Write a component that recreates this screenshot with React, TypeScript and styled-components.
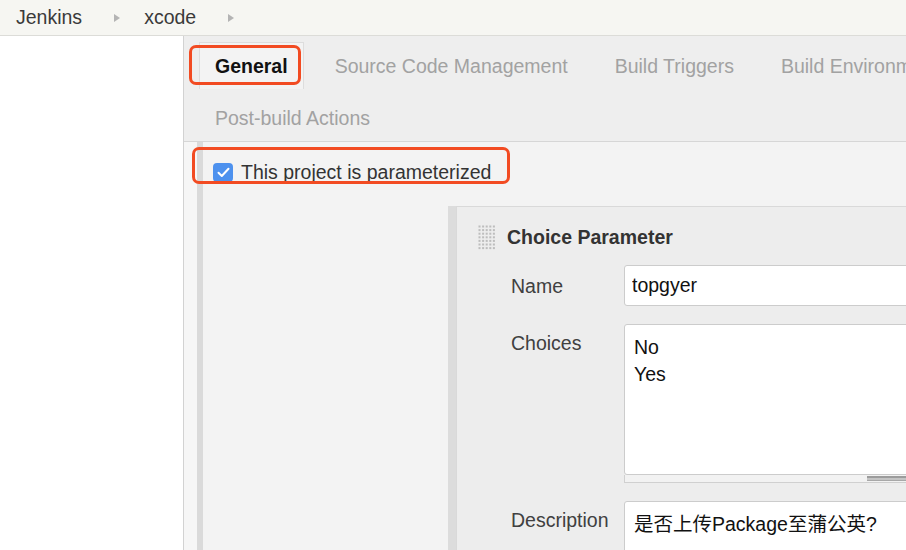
import React from 'react';
import styled, {createGlobalStyle} from 'styled-components';

const GlobalStyle = createGlobalStyle`
  html, body {
    margin: 0;
    width: 906px;
    height: 550px;
    overflow: hidden;
    background: #ffffff;
    font-family: "Liberation Sans", Arial, "Noto Sans CJK SC", sans-serif;
  }
  #root {
    width: 906px;
    height: 550px;
    overflow: hidden;
  }
`

const Page = styled.div`
  display: flex;
  flex-direction: column;
  height: 550px;
`
const Breadcrumbs = styled.nav`
  height: 35px;
  flex-shrink: 0;
  display: flex;
  align-items: center;
  padding-left: 16px;
  background: #f6f6f2;
  border-bottom: 1px solid #dcdcd8;
  font-size: 19.5px;
  color: #3a3a3a;
`
const Crumb = styled.span`
  display: flex;
  align-items: center;
`
const CrumbArrow = styled.span`
  width: 0;
  height: 0;
  margin: 0 24px 0 32px;
  border-left: 6px solid #b4b4b4;
  border-top: 4.5px solid transparent;
  border-bottom: 4.5px solid transparent;
`
const Body = styled.div`
  flex: 1;
  display: flex;
  min-height: 0;
`
const Sidebar = styled.aside`
  width: 183px;
  flex-shrink: 0;
  background: #ffffff;
  border-right: 1px solid #d2d2d2;
`
const Main = styled.main`
  flex: 1;
  min-width: 0;
  overflow: hidden;
  display: flex;
  flex-direction: column;
  background: #f6f6f6;
`
const Tabs = styled.div`
  flex-shrink: 0;
  display: flex;
  flex-direction: column;
  gap: 5px;
  padding: 6px 0 0 15px;
  background: #eeeeee;
  border-bottom: 1px solid #d6d6d6;
`
const TabRow = styled.div`
  display: flex;
  gap: 15px;
  white-space: nowrap;
`
const Tab = styled.div<{ $active?: boolean }>`
  position: relative;
  height: 47px;
  box-sizing: border-box;
  display: flex;
  align-items: center;
  padding: 0 15px;
  font-size: 19.5px;
  font-weight: ${p => (p.$active ? 700 : 400)};
  color: ${p => (p.$active ? '#111111' : '#a2a2a2')};
  background: ${p => (p.$active ? '#f3f3f3' : 'transparent')};
  border: 1px solid ${p => (p.$active ? '#dddddd' : 'transparent')};
  border-bottom: none;
  flex-shrink: 0;
`
const Highlight = styled.span<{ $top: number; $right: number; $bottom: number; $left: number }>`
  position: absolute;
  top: ${p => p.$top}px;
  right: ${p => p.$right}px;
  bottom: ${p => p.$bottom}px;
  left: ${p => p.$left}px;
  border: 3px solid #f24b22;
  border-radius: 7px;
  pointer-events: none;
`
const Content = styled.div`
  flex: 1;
  display: flex;
  padding-left: 13px;
  background: #f6f6f6;
`
const Section = styled.section`
  flex: 1;
  min-width: 0;
  padding-top: 20px;
  background: #f3f3f3;
  border-left: 6px solid #dadada;
`
const CheckRow = styled.label`
  position: relative;
  display: inline-flex;
  align-items: center;
  gap: 8px;
  margin-left: 10px;
  height: 20px;
  font-size: 19.5px;
  color: #333333;
`
const CheckBox = styled.span`
  width: 20px;
  height: 19px;
  border-radius: 4px;
  background: #4d91ee;
  display: flex;
  align-items: center;
  justify-content: center;
`
const Nested = styled.div`
  margin: 24px 0 0 245px;
  width: 700px;
  border-left: 8px solid #dcdcdc;
`
const Panel = styled.div`
  background: #ededed;
  border: 1px solid #d9d9d9;
  border-right: none;
  padding-bottom: 40px;
`
const PanelHeader = styled.div`
  display: flex;
  align-items: center;
  gap: 11px;
  margin: 18px 0 0 21px;
  height: 25px;
`
const PanelTitle = styled.h3`
  margin: 0;
  font-size: 19.5px;
  font-weight: 700;
  color: #333333;
`
const Fields = styled.div`
  display: grid;
  grid-template-columns: 113px 400px;
  row-gap: 18px;
  margin: 15px 0 0 54px;
`
const FieldLabel = styled.div<{ $center?: boolean }>`
  font-size: 19.5px;
  color: #404040;
  line-height: 36px;
  padding-top: ${p => (p.$center ? 1 : 1)}px;
  align-self: ${p => (p.$center ? 'center' : 'start')};
`
const TextInput = styled.input`
  box-sizing: border-box;
  width: 400px;
  height: 41px;
  margin: 0;
  padding: 0 7px;
  border: 1px solid #cccccc;
  border-radius: 3px;
  background: #ffffff;
  font-family: inherit;
  font-size: 19.5px;
  color: #111111;
  outline: none;
`
const TextArea = styled.textarea<{ $height: number }>`
  display: block;
  box-sizing: border-box;
  width: 400px;
  height: ${p => p.$height}px;
  margin: 0;
  padding: 9px 9px;
  border: 1px solid #cccccc;
  border-radius: 3px;
  background: #ffffff;
  font-family: "Liberation Sans", Arial, "Noto Sans CJK SC", sans-serif;
  font-size: 19.5px;
  line-height: 27px;
  color: #111111;
  resize: none;
  outline: none;
  overflow: hidden;
`
const ScrollTrack = styled.div`
  box-sizing: border-box;
  width: 400px;
  height: 8px;
  padding: 1px 0 0 242px;
  background: #f2f2f2;
  border: 1px solid #d0d0d0;
  border-top: none;
`
const ScrollThumb = styled.div`
  width: 80px;
  height: 2px;
  background: #c4c4c4;
  border-top: 2px solid #9c9c9c;
  border-bottom: 1px solid #a8a8a8;
`

const DragHandle = () => (
    <svg width="18" height="25" viewBox="0 0 18 25">
        {Array.from({length: 7}).map((_, r) =>
            Array.from({length: 5}).map((__, c) => (
                <rect key={`${r}-${c}`} x={c * 3.6 + 0.5} y={r * 3.6 + 0.5} width="2" height="2" fill="#bdbdbd"/>
            ))
        )}
    </svg>
);

const App = () => {
    return (
        <Page>
            <GlobalStyle/>
            <Breadcrumbs>
                <Crumb>Jenkins<CrumbArrow/></Crumb>
                <Crumb>xcode<CrumbArrow/></Crumb>
            </Breadcrumbs>
            <Body>
                <Sidebar/>
                <Main>
                    <Tabs>
                        <TabRow>
                            <Tab $active>
                                General
                                <Highlight $top={2} $right={2} $bottom={4} $left={-11}/>
                            </Tab>
                            <Tab>Source Code Management</Tab>
                            <Tab>Build Triggers</Tab>
                            <Tab>Build Environment</Tab>
                            <Tab>Build</Tab>
                        </TabRow>
                        <TabRow>
                            <Tab>Post-build Actions</Tab>
                        </TabRow>
                    </Tabs>
                    <Content>
                        <Section>
                            <CheckRow>
                                <CheckBox>
                                    <svg width="13" height="11" viewBox="0 0 13 11">
                                        <path d="M1.5 5.8 L4.8 9 L11.5 1.8" fill="none" stroke="#ffffff" strokeWidth="2"
                                              strokeLinecap="round" strokeLinejoin="round"/>
                                    </svg>
                                </CheckBox>
                                This project is parameterized
                                <Highlight $top={-15} $right={-19} $bottom={-2} $left={-21}/>
                            </CheckRow>
                            <Nested>
                                <Panel>
                                    <PanelHeader>
                                        <DragHandle/>
                                        <PanelTitle>Choice Parameter</PanelTitle>
                                    </PanelHeader>
                                    <Fields>
                                        <FieldLabel $center>Name</FieldLabel>
                                        <TextInput readOnly value="topgyer"/>
                                        <FieldLabel>Choices</FieldLabel>
                                        <div>
                                            <TextArea $height={151} readOnly value={'No\nYes'}/>
                                            <ScrollTrack><ScrollThumb/></ScrollTrack>
                                        </div>
                                        <FieldLabel>Description</FieldLabel>
                                        <TextArea $height={100} readOnly value="是否上传Package至蒲公英?"/>
                                    </Fields>
                                </Panel>
                            </Nested>
                        </Section>
                    </Content>
                </Main>
            </Body>
        </Page>
    );
};

export default App;
